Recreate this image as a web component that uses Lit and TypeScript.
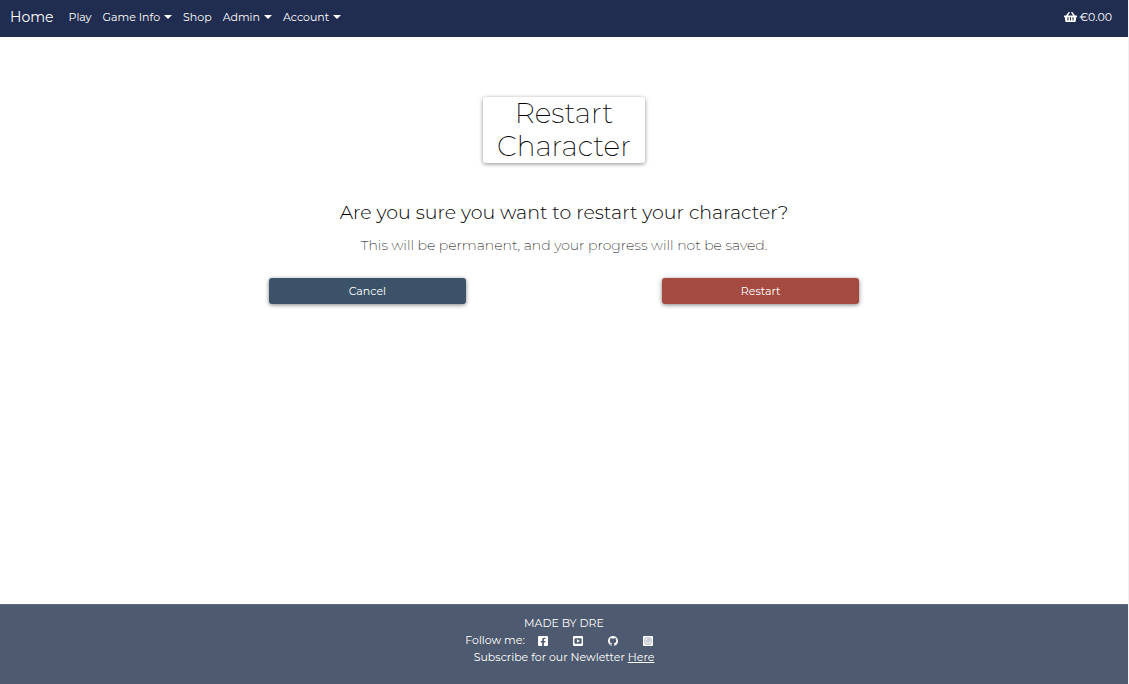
import { LitElement, html, css, svg } from "lit";
import { customElement } from "lit/decorators.js";

const basketIcon = html`<svg class="icon basket" viewBox="0 0 576 512" aria-hidden="true">
  <path d="M576 216v16c0 13.255-10.745 24-24 24h-8l-26.113 182.788C514.509 462.435 494.257 480 470.37 480H105.63c-23.887 0-44.139-17.565-47.518-41.212L32 256h-8c-13.255 0-24-10.745-24-24v-16c0-13.255 10.745-24 24-24h67.341l106.78-146.821c10.395-14.292 30.407-17.453 44.701-7.058 14.293 10.395 17.453 30.408 7.058 44.701L170.477 192h235.046L326.12 82.821c-10.395-14.292-7.234-34.306 7.059-44.701 14.291-10.395 34.306-7.235 44.701 7.058L484.659 192H552c13.255 0 24 10.745 24 24zM312 392V280c0-13.255-10.745-24-24-24s-24 10.745-24 24v112c0 13.255 10.745 24 24 24s24-10.745 24-24zm112 0V280c0-13.255-10.745-24-24-24s-24 10.745-24 24v112c0 13.255 10.745 24 24 24s24-10.745 24-24zm-224 0V280c0-13.255-10.745-24-24-24s-24 10.745-24 24v112c0 13.255 10.745 24 24 24s24-10.745 24-24z"/>
</svg>`;

const socials = [
  {
    name: "Facebook",
    box: "0 32 448 448",
    shape: svg`<path d="M400 32H48A48 48 0 0 0 0 80v352a48 48 0 0 0 48 48h137.25V327.69h-63V256h63v-54.64c0-62.15 37-96.48 93.67-96.48 27.14 0 55.52 4.84 55.52 4.84v61h-31.27c-30.81 0-40.42 19.12-40.42 38.73V256h68.78l-11 71.69h-57.78V480H400a48 48 0 0 0 48-48V80a48 48 0 0 0-48-48z"/>`,
  },
  {
    name: "YouTube",
    box: "0 0 448 448",
    shape: svg`<rect width="448" height="448" rx="48"/>
      <rect x="62" y="106" width="324" height="236" rx="56" fill="#4e5a70"/>
      <path d="M176 148l132 76-132 76z"/>`,
  },
  {
    name: "GitHub",
    box: "0 0 16 16",
    shape: svg`<path d="M8 0C3.58 0 0 3.58 0 8c0 3.54 2.29 6.53 5.47 7.59.4.07.55-.17.55-.38 0-.19-.01-.82-.01-1.49-2.01.37-2.53-.49-2.69-.94-.09-.23-.48-.94-.82-1.13-.28-.15-.68-.52-.01-.53.63-.01 1.08.58 1.23.82.72 1.21 1.87.87 2.33.66.07-.52.28-.87.51-1.07-1.78-.2-3.64-.89-3.64-3.95 0-.87.31-1.59.82-2.15-.08-.2-.36-1.02.08-2.12 0 0 .67-.21 2.2.82.64-.18 1.32-.27 2-.27s1.36.09 2 .27c1.53-1.04 2.2-.82 2.2-.82.44 1.1.16 1.92.08 2.12.51.56.82 1.27.82 2.15 0 3.07-1.87 3.75-3.65 3.95.29.25.54.73.54 1.48 0 1.07-.01 1.93-.01 2.2 0 .21.15.46.55.38A8.01 8.01 0 0 0 16 8c0-4.42-3.58-8-8-8z"/>`,
  },
  {
    name: "Instagram",
    box: "0 0 448 448",
    shape: svg`<rect width="448" height="448" rx="48"/>
      <g fill="none" stroke="#4e5a70" stroke-width="22">
        <rect x="82" y="82" width="284" height="284" rx="76"/>
        <circle cx="224" cy="224" r="62"/>
      </g>
      <circle cx="302" cy="146" r="18" fill="#4e5a70"/>`,
  },
];

const links = [
  { label: "Play", menu: false },
  { label: "Game Info", menu: true },
  { label: "Shop", menu: false },
  { label: "Admin", menu: true },
  { label: "Account", menu: true },
];

@customElement("app-root")
export class AppRoot extends LitElement {
  static styles = css`
    :host {
      display: flex;
      flex-direction: column;
      box-sizing: border-box;
      min-height: 100vh;
      border-right: 1px solid #f1f2f4;
      background: #fff;
      color: #000;
      font-family: Montserrat, Inter, sans-serif;
      font-size: 11px;
      line-height: 17px;
    }
    a {
      color: inherit;
      text-decoration: none;
    }
    .nav {
      display: flex;
      align-items: center;
      padding: 7px 16px 10px 10px;
      background: #212d50;
      color: #fff;
    }
    .brand {
      margin-right: 15px;
      font-size: 14px;
      line-height: 20px;
    }
    .links {
      display: flex;
      gap: 11px;
      flex: 1;
      margin: 0;
      padding: 0;
      list-style: none;
    }
    .links a {
      display: flex;
      align-items: center;
    }
    .caret {
      margin-left: 4px;
      border: 4px solid transparent;
      border-top-color: currentColor;
      border-bottom: 0;
    }
    .cart {
      display: flex;
      align-items: center;
      gap: 3px;
    }
    .icon {
      display: block;
      fill: currentColor;
    }
    .basket {
      width: 13px;
      height: 12px;
    }
    main {
      flex: 1;
      display: flex;
      flex-direction: column;
      align-items: center;
      padding: 60px 16px;
      text-align: center;
      font-weight: 200;
    }
    h1 {
      width: min-content;
      margin: 0 0 37px;
      padding: 0 14px;
      border-radius: 3px;
      box-shadow: 0 1px 4px rgba(0, 0, 0, 0.45);
      font-size: 28px;
      font-weight: 200;
      line-height: 33px;
    }
    h2 {
      margin: 0 0 8px;
      font-size: 19px;
      font-weight: 300;
      line-height: 26px;
    }
    p {
      margin: 0;
    }
    .note {
      margin-bottom: 22px;
      font-size: 14px;
      line-height: 22px;
    }
    .actions {
      display: grid;
      grid-template-columns: repeat(3, 1fr);
      width: 100%;
      max-width: 590px;
    }
    button {
      padding: 5px 12px 4px;
      border: 0;
      border-radius: 3px;
      box-shadow: 0 1px 4px rgba(0, 0, 0, 0.5);
      color: #fff;
      font: inherit;
      font-weight: 400;
      cursor: pointer;
    }
    .cancel {
      background: #3c5269;
    }
    .restart {
      grid-column: 3;
      background: #a44a40;
    }
    footer {
      padding: 10px 16px 18px;
      border-top: 1px solid #5f6980;
      background: #4e5a70;
      color: #fff;
      text-align: center;
    }
    .follow {
      display: flex;
      justify-content: center;
      align-items: center;
    }
    .social {
      display: flex;
      gap: 25px;
      padding: 0 10px 0 13px;
    }
    .social .icon {
      width: 10px;
      height: 10px;
    }
    .here {
      text-decoration: underline;
    }
  `;

  render() {
    return html`
      <nav class="nav">
        <a class="brand" href="#">Home</a>
        <ul class="links">
          ${links.map(
            (l) => html`<li><a href="#">${l.label}${l.menu ? html`<span class="caret"></span>` : ""}</a></li>`
          )}
        </ul>
        <a class="cart" href="#">${basketIcon}<span>€0.00</span></a>
      </nav>
      <main>
        <h1>Restart Character</h1>
        <h2>Are you sure you want to restart your character?</h2>
        <p class="note">This will be permanent, and your progress will not be saved.</p>
        <div class="actions">
          <button class="cancel" type="button">Cancel</button>
          <button class="restart" type="button">Restart</button>
        </div>
      </main>
      <footer>
        <p>MADE BY DRE</p>
        <div class="follow">
          <span>Follow me:</span>
          <div class="social">
            ${socials.map(
              (s) => html`<a href="#" aria-label=${s.name}><svg class="icon" viewBox=${s.box}>${s.shape}</svg></a>`
            )}
          </div>
        </div>
        <p>Subscribe for our Newletter <a class="here" href="#">Here</a></p>
      </footer>
    `;
  }
}
